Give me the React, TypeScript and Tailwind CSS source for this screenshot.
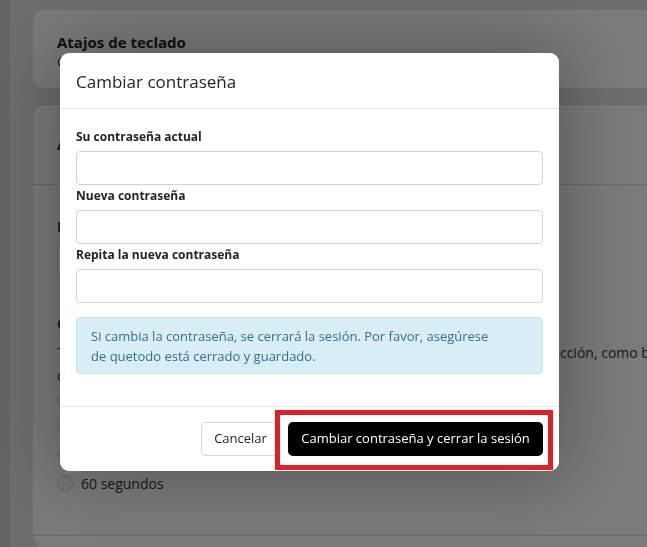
const fields = [
  { id: "current", label: "Su contraseña actual" },
  { id: "new", label: "Nueva contraseña" },
  { id: "repeat", label: "Repita la nueva contraseña" },
];

const Radio = ({ label }: { label: string }) => (
  <div className="flex items-center gap-2 h-[20px]">
    <span className="w-4 h-4 rounded-full border border-[#c4c4c4] bg-[#eeeeee]" />
    <span className="text-[14px] text-[#333]">{label}</span>
  </div>
);

const Background = () => (
  <div className="flex min-h-[547px] bg-[#dadada]">
    <div className="w-[10px] bg-[#cacaca]" />
    <div className="flex-1 min-w-0 pl-[23px] pt-[10px] flex flex-col gap-[17px]">
      <div className="h-[78px] rounded-l-xl bg-[#f5f5f5] pl-6 pt-[22px]">
        <h2 className="text-[15px] font-bold text-[#222] leading-5">Atajos de teclado</h2>
        <p className="text-[14px] text-[#444] leading-5">Consulte los atajos disponibles</p>
      </div>
      <div className="flex-1 rounded-l-xl bg-[#f5f5f5] flex flex-col overflow-hidden">
        <div className="h-[80px] border-b border-[#d5d5d5] pl-6 flex items-center">
          <h2 className="text-[15px] font-bold text-[#222]">Ajustes de la sesión</h2>
        </div>
        <div className="pl-6 pt-[32px] flex flex-col text-[14px] text-[#333]">
          <p className="font-bold leading-5">Idioma</p>
          <div className="mt-[5px] w-[300px] h-[34px] rounded border border-[#ccc] bg-white" />
          <p className="font-bold leading-5 mt-[38px]">Cierre de sesión automático</p>
          <p className="leading-[23px] mt-[7px] whitespace-nowrap">
            Tiempo de inactividad antes de cerrar automáticamente la sesión en la
            interacción, como bloquear la pantalla
            <br />
            o cerrar el navegador.
          </p>
          <div className="flex flex-col gap-[8px] mt-[2px]">
            <Radio label="Nunca" />
            <Radio label="10 segundos" />
            <Radio label="30 segundos" />
            <Radio label="60 segundos" />
          </div>
        </div>
        <div className="mt-auto mb-[11px] border-b border-[#d5d5d5]" />
      </div>
    </div>
  </div>
);

export default function App() {
  return (
    <div className="relative font-['Open_Sans',sans-serif]">
      <Background />
      <div className="fixed inset-0 bg-black/50 flex pl-[60px] pt-[53px]">
        <div className="w-[499px] h-[418px] rounded-[9px] bg-white shadow-[0_0_70px_rgba(0,0,0,0.35)] flex flex-col">
          <div className="h-[56px] px-4 flex items-center border-b border-[#e3e6ea]">
            <h3 className="text-[17px] text-[#212529] mt-[2px]">Cambiar contraseña</h3>
          </div>
          <div className="px-4 pt-[17px] pb-4 flex flex-col">
            {fields.map((f) => (
              <div key={f.id} className="flex flex-col">
                <label className="text-[12px] font-bold text-[#212529] leading-[21px] mb-[4px]">
                  {f.label}
                </label>
                <input
                  type="password"
                  className="h-[34px] rounded-[4px] border border-[#ced4da] outline-none"
                />
              </div>
            ))}
            <div className="mt-[14px] mb-4 h-[57px] rounded-[4px] border border-[#bce8f1] bg-[#d9edf7] px-[14px] py-[8px] text-[13px] leading-[20px] text-[#31708f]">
              Si cambia la contraseña, se cerrará la sesión. Por favor, asegúrese
              <br />
              de quetodo está cerrado y guardado.
            </div>
          </div>
          <div className="border-t border-[#e3e6ea] flex-1 px-4 flex items-center justify-end gap-2">
            <button className="h-[34px] w-[79px] rounded-[5px] border border-[#d3d7dc] bg-white text-[13px] text-[#212529]">
              Cancelar
            </button>
            <div className="relative">
              <button className="h-[34px] w-[255px] rounded-[5px] bg-black text-[13px] text-white">
                Cambiar contraseña y cerrar la sesión
              </button>
              <div className="absolute left-[-13px] top-[-12px] right-[-10px] bottom-[-14px] border-[5px] border-[#e21f26] pointer-events-none" />
            </div>
          </div>
        </div>
      </div>
    </div>
  );
}
